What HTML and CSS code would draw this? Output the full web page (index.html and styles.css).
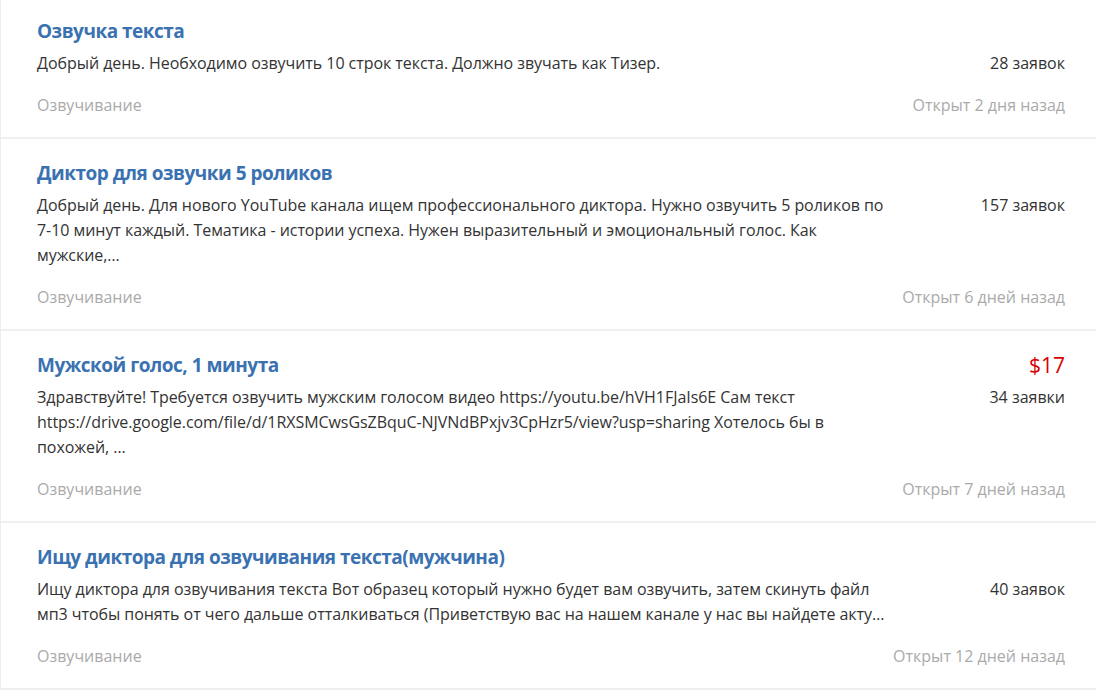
FILE: index.html
```html
<!DOCTYPE html>
<html lang="ru">
<head>
<meta charset="utf-8">
<link rel="stylesheet" href="styles.css">
</head>
<body>
<div class="list">
  <div class="item">
    <div class="head">
      <a class="title">Озвучка текста</a>
    </div>
    <div class="body">
      <p class="desc">Добрый день. Необходимо озвучить 10 строк текста. Должно звучать как Тизер.</p>
      <div class="count">28 заявок</div>
    </div>
    <div class="foot">
      <span class="cat">Озвучивание</span>
      <span class="date">Открыт 2 дня назад</span>
    </div>
  </div>
  <div class="item">
    <div class="head">
      <a class="title">Диктор для озвучки 5 роликов</a>
    </div>
    <div class="body">
      <p class="desc">Добрый день. Для нового YouTube канала ищем профессионального диктора. Нужно озвучить 5 роликов по 7-10 минут каждый. Тематика - истории успеха. Нужен выразительный и эмоциональный голос. Как мужские,…</p>
      <div class="count">157 заявок</div>
    </div>
    <div class="foot">
      <span class="cat">Озвучивание</span>
      <span class="date">Открыт 6 дней назад</span>
    </div>
  </div>
  <div class="item">
    <div class="head">
      <a class="title">Мужской голос, 1 минута</a>
      <span class="price">$17</span>
    </div>
    <div class="body">
      <p class="desc">Здравствуйте! Требуется озвучить мужским голосом видео https://youtu.be/hVH1FJaIs6E Сам текст https://drive.google.com/file/d/1RXSMCwsGsZBquC-NJVNdBPxjv3CpHzr5/view?usp=sharing Хотелось бы в похожей, …</p>
      <div class="count">34 заявки</div>
    </div>
    <div class="foot">
      <span class="cat">Озвучивание</span>
      <span class="date">Открыт 7 дней назад</span>
    </div>
  </div>
  <div class="item">
    <div class="head">
      <a class="title">Ищу диктора для озвучивания текста(мужчина)</a>
    </div>
    <div class="body">
      <p class="desc">Ищу диктора для озвучивания текста Вот образец который нужно будет вам озвучить, затем скинуть файл мп3 чтобы понять от чего дальше отталкиваться (Приветствую вас на нашем канале у нас вы найдете акту…</p>
      <div class="count">40 заявок</div>
    </div>
    <div class="foot">
      <span class="cat">Озвучивание</span>
      <span class="date">Открыт 12 дней назад</span>
    </div>
  </div>
</div>
</body>
</html>
```

FILE: styles.css
```css
html, body {
  margin: 0;
  padding: 0;
  background: #fff;
}
body {
  font-family: "Open Sans", "Noto Sans", sans-serif;
  color: #333;
  font-size: 16px;
  overflow: hidden;
}
.list {
  border-left: 1px solid #ececec;
  margin-top: -3px;
}
.item {
  padding: 20px 31px 19px 36px;
  border-bottom: 2px solid #efefef;
}
.head {
  display: flex;
  justify-content: space-between;
  align-items: center;
  height: 28px;
}
.title {
  font-weight: 700;
  font-size: 19px;
  line-height: 28px;
  color: #3a72b1;
  letter-spacing: -0.5px;
  text-decoration: none;
}
.price {
  font-size: 21px;
  line-height: 28px;
  color: #d70000;
}
.body {
  display: flex;
  justify-content: space-between;
  align-items: flex-start;
  margin-top: 6px;
}
.desc {
  margin: 0;
  width: 858px;
  line-height: 25px;
  letter-spacing: -0.05px;
}
.count {
  line-height: 25px;
  white-space: nowrap;
}
.foot {
  display: flex;
  justify-content: space-between;
  margin-top: 17px;
  line-height: 25px;
  color: #aaa;
}
```
